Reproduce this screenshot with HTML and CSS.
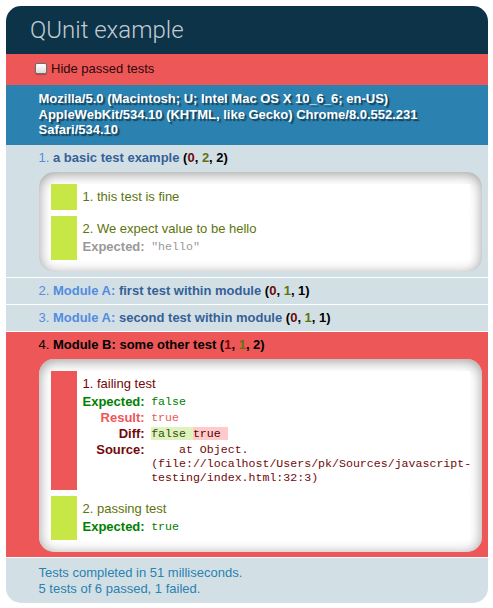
FILE: index.html
```html
<!DOCTYPE html>
<html>
<head>
<meta charset="utf-8">
<title>QUnit example</title>
<link rel="stylesheet" href="styles.css">
</head>
<body>
<h1 class="qunit-header">QUnit example</h1>
<div class="toolbar"><label class="hide-label"><input type="checkbox" class="hide-check">Hide passed tests</label></div>
<h2 class="user-agent">Mozilla/5.0 (Macintosh; U; Intel Mac OS X 10_6_6; en-US) AppleWebKit/534.10 (KHTML, like Gecko) Chrome/8.0.552.231 Safari/534.10</h2>
<ol class="tests">
  <li class="test pass">
    <strong><span class="test-name">a basic test example</span> <b class="counts">(<b class="failed">0</b>, <b class="passed">2</b>, 2)</b></strong>
    <ol class="asserts">
      <li class="assert pass-a"><span class="message">this test is fine</span></li>
      <li class="assert pass-a"><span class="message">We expect value to be hello</span>
        <table class="detail"><tr class="test-expected"><th>Expected: </th><td><pre>"hello"</pre></td></tr></table>
      </li>
    </ol>
  </li>
  <li class="test pass">
    <strong><span class="module-name">Module A: </span><span class="test-name">first test within module</span> <b class="counts">(<b class="failed">0</b>, <b class="passed">1</b>, 1)</b></strong>
  </li>
  <li class="test pass">
    <strong><span class="module-name">Module A: </span><span class="test-name">second test within module</span> <b class="counts">(<b class="failed">0</b>, <b class="passed">1</b>, 1)</b></strong>
  </li>
  <li class="test fail">
    <strong><span class="module-name">Module B: </span><span class="test-name">some other test</span> <b class="counts">(<b class="failed">1</b>, <b class="passed">1</b>, 2)</b></strong>
    <ol class="asserts">
      <li class="assert fail-a"><span class="message">failing test</span>
        <table class="detail">
          <tr class="test-expected"><th>Expected: </th><td><pre>false</pre></td></tr>
          <tr class="test-actual"><th>Result: </th><td><pre>true</pre></td></tr>
          <tr class="test-diff"><th>Diff: </th><td><pre><del>false </del><ins>true </ins></pre></td></tr>
          <tr class="test-source"><th>Source: </th><td><pre>    at Object.
(file://localhost/Users/pk/Sources/javascript-
testing/index.html:32:3)</pre></td></tr>
        </table>
      </li>
      <li class="assert pass-a"><span class="message">passing test</span>
        <table class="detail"><tr class="test-expected"><th>Expected: </th><td><pre>true</pre></td></tr></table>
      </li>
    </ol>
  </li>
</ol>
<p class="result">Tests completed in 51 milliseconds.<br>5 tests of 6 passed, 1 failed.</p>
</body>
</html>
```

FILE: styles.css
```css
body {
  margin: 6px 5px 8px 6px;
  font-family: "Liberation Sans", Arial, sans-serif;
  background: #fff;
}

.qunit-header {
  margin: 0;
  padding: 12px 0 12px 24px;
  color: #c2ccd1;
  background-color: #0d3349;
  font-family: Roboto, "Liberation Sans", sans-serif;
  font-size: 24px;
  line-height: 24px;
  font-weight: 300;
  border-radius: 15px 15px 0 0;
}

.toolbar {
  padding: 6.5px 0 6.5px 26px;
  background-color: #ee5757;
  color: #2a0a0a;
  font-size: 13px;
  line-height: 16px;
}

.hide-label {
  display: inline-flex;
  align-items: center;
}

.hide-check {
  -webkit-appearance: none;
  appearance: none;
  width: 12px;
  height: 11px;
  margin: 0 4px 0 3px;
  border: 1px solid #6d6d6d;
  border-radius: 2px;
  background: linear-gradient(#ffffff, #dcdcdc);
  box-shadow: 0 1px 1px rgba(0,0,0,0.25);
}

.user-agent {
  margin: 0;
  padding: 6.5px 0 6.5px 32.5px;
  background-color: #2b81af;
  color: #fff;
  font-size: 13px;
  line-height: 15.7px;
  font-weight: bold;
  text-shadow: rgba(0, 0, 0, 0.5) 2px 2px 1px;
}

.tests {
  margin: 0;
  padding: 0;
  list-style-position: inside;
  font-size: 13px;
}

.test {
  padding: 5px 6.5px 5.2px 32.5px;
  border-bottom: 1px solid #fff;
  line-height: 16px;
}

.test.pass { color: #528ce0; background-color: #d2e0e6; }
.test.pass .test-name { color: #366097; }
.test.fail { color: #000; background-color: #ee5757; }
.test.fail .test-name,
.test.fail .module-name { color: #000; }

.counts { color: #000; }
.counts .failed { color: #710909; }
.counts .passed { color: #5e740b; }

.asserts {
  margin: 6px 0 0 0;
  padding: 6px;
  list-style-position: inside;
  background-color: #fff;
  border-radius: 15px;
  box-shadow: inset 0 2px 13px #999;
}

.assert {
  margin: 6px;
  padding: 5px 6px;
  background-color: #fff;
  line-height: 16px;
}

.assert.pass-a {
  color: #5e740b;
  border-left: 26px solid #c6e746;
}

.assert.fail-a {
  color: #710909;
  border-left: 26px solid #ee5757;
}

.detail {
  border-collapse: collapse;
  margin-top: 2px;
}

.detail th {
  text-align: right;
  vertical-align: top;
  padding: 0 6.5px 0 0;
  font-size: 13px;
  line-height: 16px;
}

.detail td {
  vertical-align: top;
  padding: 0;
}

.detail pre {
  margin: 0;
  font-family: "Liberation Mono", "Courier New", monospace;
  font-size: 11.6px;
  line-height: 14px;
  padding-top: 1px;
  white-space: pre-wrap;
}

.test.pass .test-expected { color: #999; }
.test.fail .test-expected { color: green; }
.test.fail .test-actual { color: #ee5757; }

.detail del {
  background-color: #e0f2be;
  color: #374e0c;
  text-decoration: none;
}

.detail ins {
  background-color: #ffcaca;
  color: #500;
  text-decoration: none;
}

.result {
  margin: 0;
  padding: 6.5px 6.5px 6.5px 32.5px;
  color: #2b81af;
  background-color: #d2e0e6;
  font-size: 13px;
  line-height: 16px;
  border-radius: 0 0 15px 15px;
}
```
